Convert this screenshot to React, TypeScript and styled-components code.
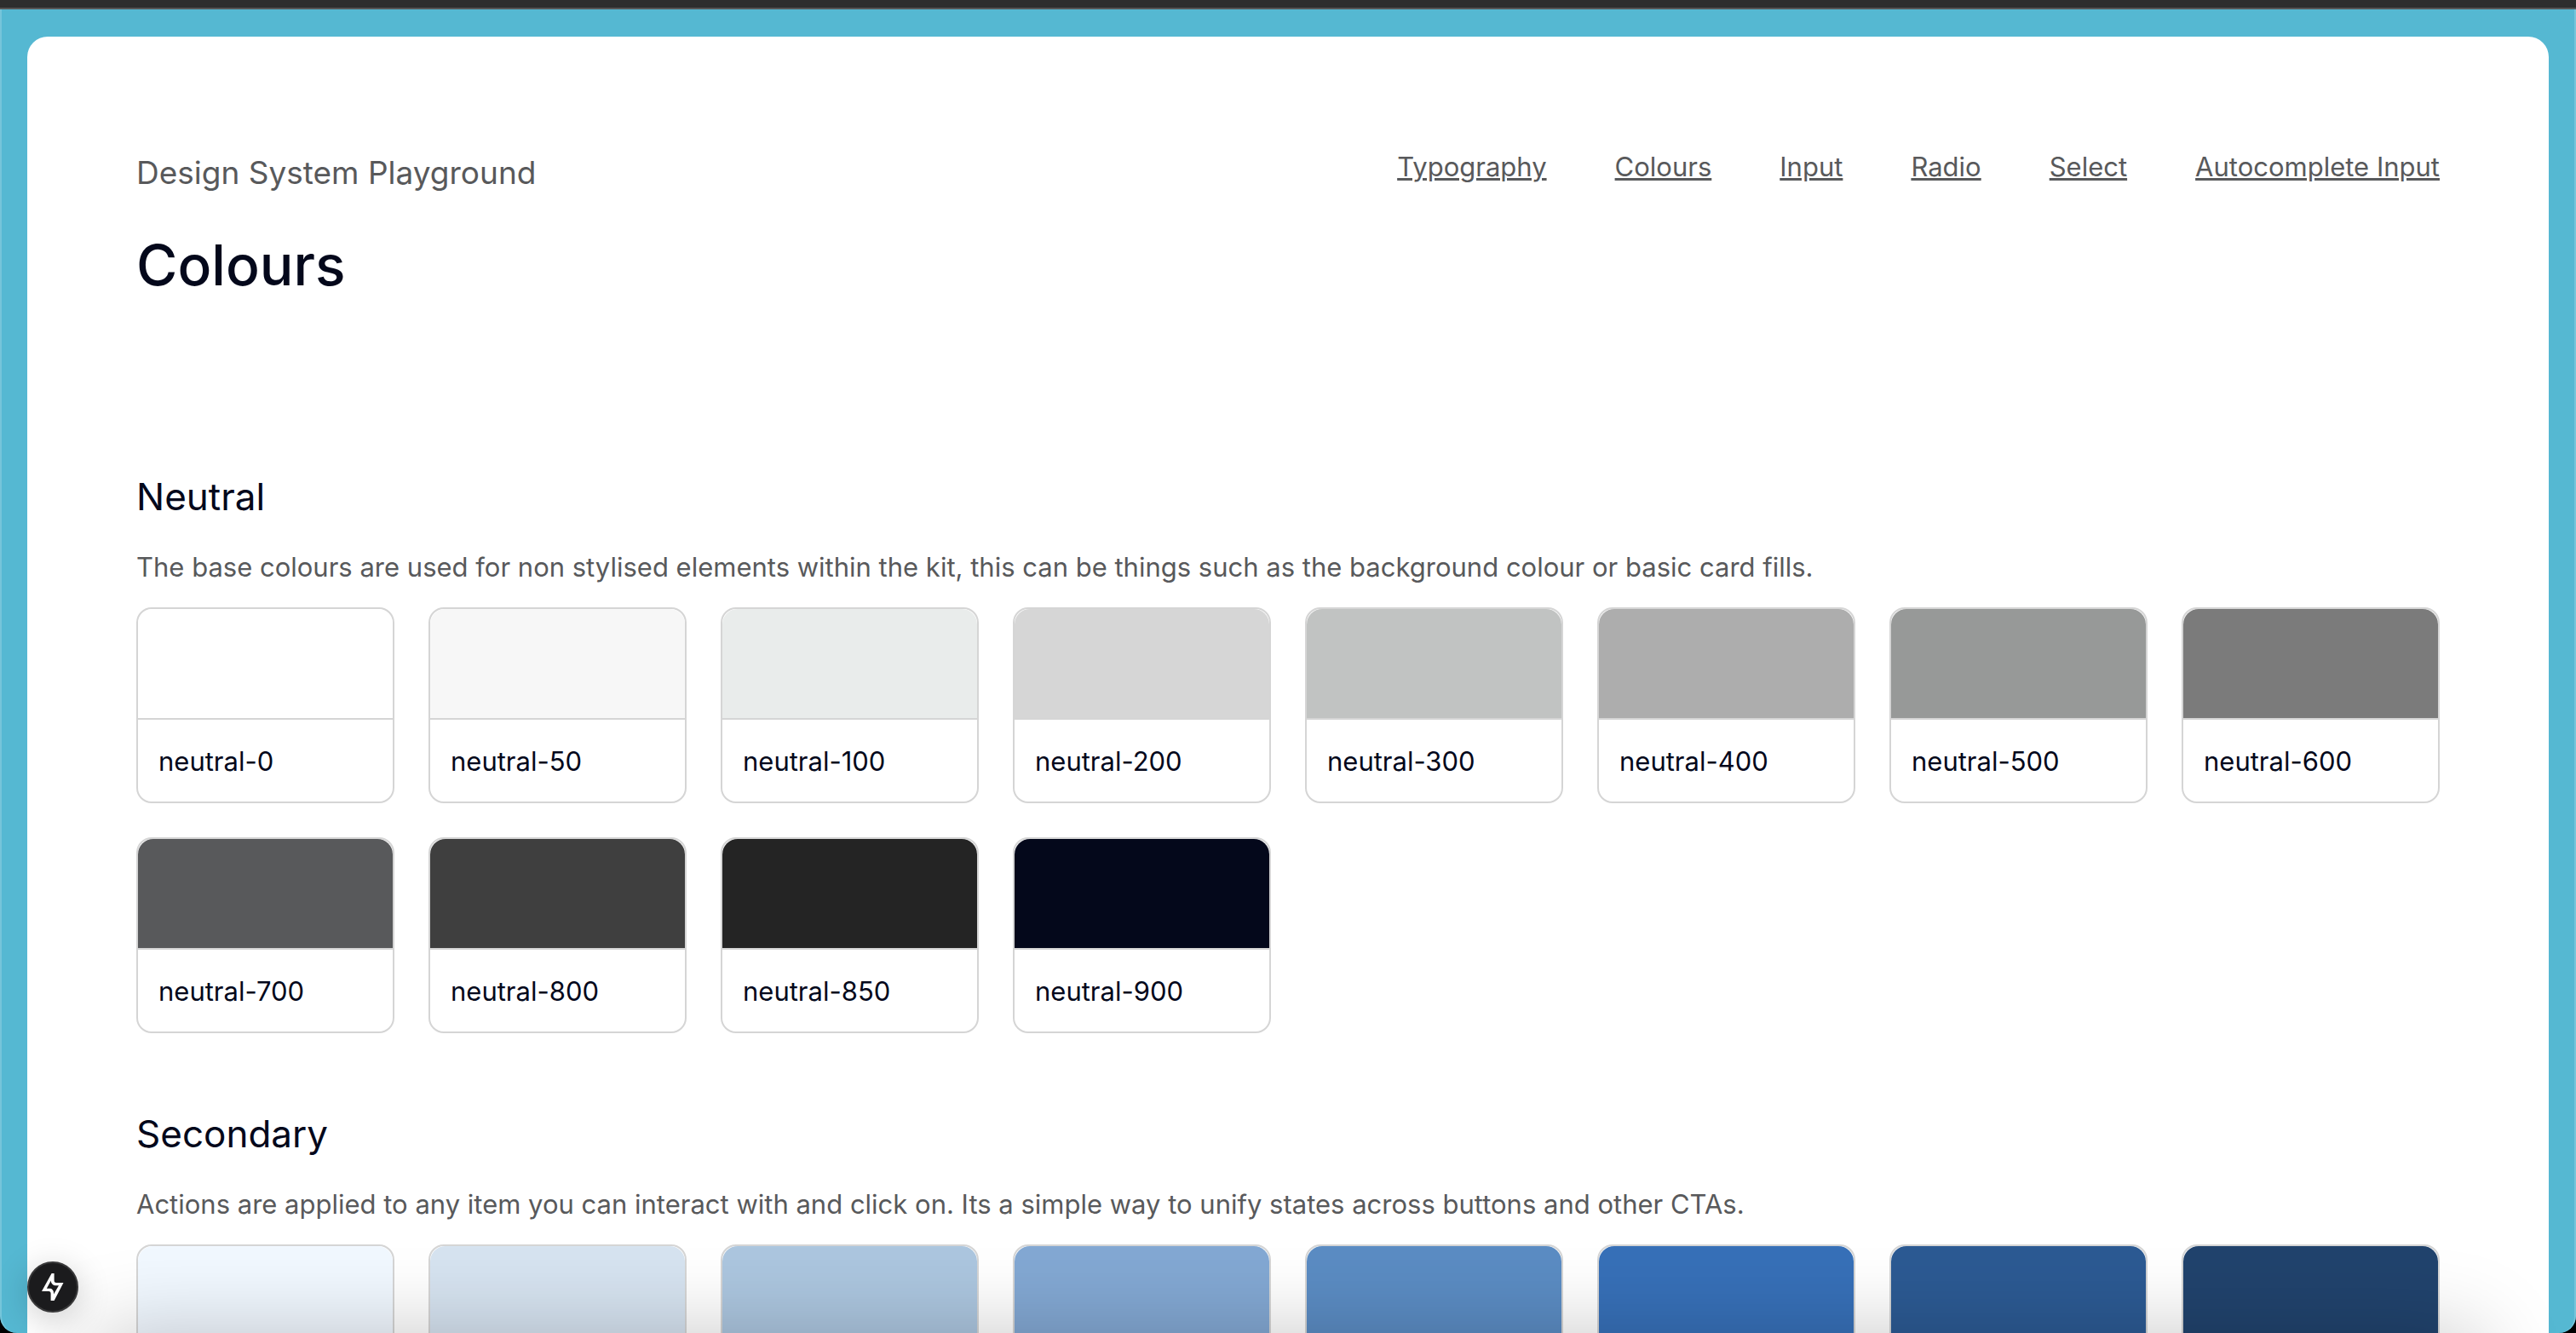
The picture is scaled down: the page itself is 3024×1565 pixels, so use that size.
import React from "react";
import styled, { createGlobalStyle } from "styled-components";

const GlobalStyle = createGlobalStyle`
  *, *::before, *::after { box-sizing: border-box; }
  html { background: #000; }
  body {
    margin: 0;
    overflow: hidden;
    font-family: Inter, "Liberation Sans", sans-serif;
    font-size: 31px;
    line-height: 48px;
    color: #04081b;
  }
`;

const Window = styled.div`
  display: flex;
  flex-direction: column;
  height: 100vh;
  overflow: hidden;
  border-radius: 0 0 20px 20px;
  background: #55b8d2;
`;

const Chrome = styled.div`
  flex: none;
  height: 11px;
  background: #2d2d2d;
  border-bottom: 2px solid #565656;
`;

const Viewport = styled.div`
  position: relative;
  flex: 1;
  min-height: 0;
  overflow: hidden;
  padding: 32px 30px 0;
  border: solid #76c5da;
  border-width: 0 2px;
  border-radius: 0 0 20px 20px;
`;

const Page = styled.div`
  padding: 129px 128px;
  border-radius: 24px;
  background: #fff;
`;

const Header = styled.header`
  display: flex;
  justify-content: space-between;
  align-items: flex-start;
  margin-bottom: 182px;
`;

const Titles = styled.div`
  display: flex;
  flex-direction: column;
  gap: 23px;
`;

const SiteName = styled.p`
  margin: 0;
  font-size: 37px;
  line-height: 62px;
  color: #58595b;
`;

const PageTitle = styled.h1`
  margin: 0;
  font-size: 66px;
  line-height: 108px;
  font-weight: 500;
`;

const Nav = styled.nav`
  display: flex;
  gap: 80px;
`;

const NavLink = styled.a`
  color: #58595b;
  text-decoration: underline;
  text-decoration-thickness: 3px;
`;

const Sections = styled.main`
  display: flex;
  flex-direction: column;
  gap: 82px;
`;

const Section = styled.section`
  display: flex;
  flex-direction: column;
  gap: 23px;
`;

const SectionTitle = styled.h2`
  margin: 0;
  font-size: 44px;
  line-height: 72px;
  font-weight: 400;
`;

const Description = styled.p`
  margin: 0;
  color: #58595b;
`;

const Grid = styled.div`
  display: grid;
  grid-template-columns: repeat(8, minmax(0, 1fr));
  gap: 40px;
`;

const Card = styled.div`
  border: 2px solid #d5d5d5;
  border-radius: 18px;
  background: #fff;
`;

const Swatch = styled.div<{ $color: string }>`
  height: 130px;
  border-bottom: 2px solid #d5d5d5;
  border-radius: 18px 18px 0 0;
  background: ${(p) => p.$color};
  background-clip: padding-box;
`;

const Label = styled.div`
  padding: 25px 24px 23px;
`;

const BottomShade = styled.div`
  position: absolute;
  left: 110px;
  right: 110px;
  top: 100%;
  height: 200px;
  box-shadow: 0 0 100px rgba(0, 0, 0, 0.22);
  pointer-events: none;
`;

const DevButton = styled.button`
  position: absolute;
  left: 30px;
  bottom: 24px;
  display: flex;
  align-items: center;
  justify-content: center;
  width: 60px;
  height: 60px;
  padding: 0;
  border: 2px solid #39393a;
  border-radius: 50%;
  background: #1b1b1d;
  box-shadow: 0 8px 40px rgba(0, 0, 0, 0.2);
`;

const links = ["Typography", "Colours", "Input", "Radio", "Select", "Autocomplete Input"];

type Color = { value: string; name?: string };

const palettes: { title: string; text: string; colors: Color[] }[] = [
  {
    title: "Neutral",
    text: "The base colours are used for non stylised elements within the kit, this can be things such as the background colour or basic card fills.",
    colors: [
      { name: "neutral-0", value: "#ffffff" },
      { name: "neutral-50", value: "#f7f7f7" },
      { name: "neutral-100", value: "#e9eceb" },
      { name: "neutral-200", value: "#d6d6d6" },
      { name: "neutral-300", value: "#c1c3c2" },
      { name: "neutral-400", value: "#adadad" },
      { name: "neutral-500", value: "#979998" },
      { name: "neutral-600", value: "#7b7b7b" },
      { name: "neutral-700", value: "#58595b" },
      { name: "neutral-800", value: "#3f3f3f" },
      { name: "neutral-850", value: "#242424" },
      { name: "neutral-900", value: "#04081b" },
    ],
  },
  {
    title: "Secondary",
    text: "Actions are applied to any item you can interact with and click on. Its a simple way to unify states across buttons and other CTAs.",
    colors: [
      { value: "#f1f8ff" },
      { value: "#d6e3f0" },
      { value: "#acc6df" },
      { value: "#83a8d3" },
      { value: "#5b8cc3" },
      { value: "#3770b8" },
      { value: "#2c5a93" },
      { value: "#21436d" },
    ],
  },
];

const Bolt = () => (
  <svg width="26" height="32" viewBox="0 0 26 32" aria-hidden="true">
    <path
      fill="#fff"
      fillRule="evenodd"
      d="M11.6 0H14.6V8.5C14.6 10 15.4 11 17 11H25.5L14.6 32H10.6V23.5C10.6 22 9.8 21 8.2 21H0ZM10.8 8.5 5.8 17.8H9C12 17.8 14 19.8 14 23V24.5L20 14.3H17C13.5 14.3 10.8 12 10.8 8.5Z"
    />
  </svg>
);

export default function App() {
  return (
    <>
      <GlobalStyle />
      <Window>
        <Chrome />
        <Viewport>
          <Page>
            <Header>
              <Titles>
                <SiteName>Design System Playground</SiteName>
                <PageTitle>Colours</PageTitle>
              </Titles>
              <Nav>
                {links.map((l) => (
                  <NavLink key={l} href="#">{l}</NavLink>
                ))}
              </Nav>
            </Header>
            <Sections>
              {palettes.map((p) => (
                <Section key={p.title}>
                  <SectionTitle>{p.title}</SectionTitle>
                  <Description>{p.text}</Description>
                  <Grid>
                    {p.colors.map(({ name, value }) => (
                      <Card key={value}>
                        <Swatch $color={value} />
                        {name && <Label>{name}</Label>}
                      </Card>
                    ))}
                  </Grid>
                </Section>
              ))}
            </Sections>
          </Page>
          <BottomShade />
          <DevButton type="button" aria-label="Open developer tools">
            <Bolt />
          </DevButton>
        </Viewport>
      </Window>
    </>
  );
}
